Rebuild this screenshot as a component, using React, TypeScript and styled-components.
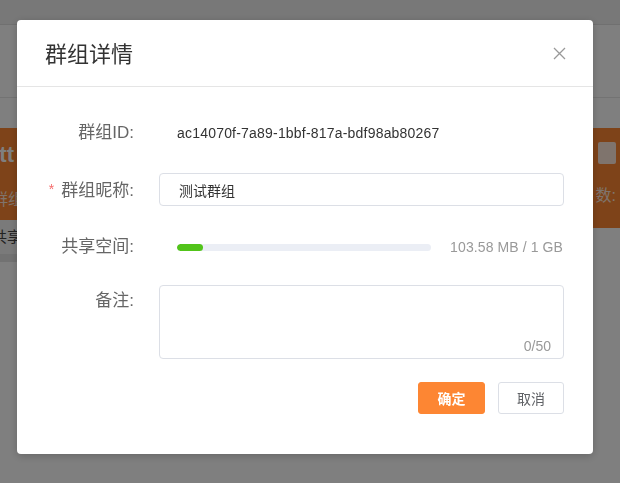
import styled, { createGlobalStyle } from 'styled-components'

const GlobalStyle = createGlobalStyle`
  html, body {
    margin: 0;
    padding: 0;
    background: #fff;
    font-family: "Liberation Sans", "Noto Sans CJK SC", sans-serif;
  }
  * {
    box-sizing: border-box;
  }
`

// Page behind the modal (only its edges show)
const Page = styled.div`
  width: 620px;
  height: 483px;
  overflow: hidden;
  background: #fff;
`

const TopBar = styled.div`
  height: 25px;
  background: #f0f0f0;
  border-bottom: 1px solid #e0e0e0;
`

const SubBar = styled.div`
  height: 73px;
  border-bottom: 1px solid #e6e6e6;
`

const Banner = styled.div`
  margin-top: 30px;
  height: 100px;
  background: #fd8633;
  display: flex;
  justify-content: space-between;
  color: #fff;
`

const BannerSide = styled.div<{ $right?: boolean }>`
  display: flex;
  flex-direction: column;
  align-items: ${p => (p.$right ? 'flex-end' : 'flex-start')};
  padding-top: 14px;
  gap: 22px;
  margin-left: ${p => (p.$right ? '0' : '-8px')};
  margin-right: ${p => (p.$right ? '4px' : '0')};
`

const BannerTitle = styled.div`
  font-size: 22px;
  font-weight: bold;
  line-height: 26px;
`

const BannerText = styled.div`
  font-size: 16px;
  line-height: 20px;
  color: #ffe9da;
`

const BannerIcon = styled.div`
  width: 18px;
  height: 22px;
  background: #ffe9da;
  border-radius: 2px;
`

const InfoRow = styled.div`
  width: 60px;
  margin-top: -8px;
  background: #f4f4f4;
  color: #444;
  font-size: 15px;
  line-height: 34px;
  text-indent: -8px;
  border-bottom: 8px solid #e4e4e4;
  height: 42px;
`

// Modal
const Overlay = styled.div`
  position: fixed;
  inset: 0;
  z-index: 100;
  background: rgba(0, 0, 0, 0.5);
  padding: 20px 0 0 17px;
`

const Dialog = styled.div`
  width: 576px;
  background: #fff;
  border-radius: 4px;
  box-shadow: 0 2px 8px rgba(0, 0, 0, 0.2);
`

const Header = styled.div`
  height: 67px;
  padding: 0 28px 3px;
  border-bottom: 1px solid #e5e5e5;
  display: flex;
  align-items: center;
  justify-content: space-between;
`

const Title = styled.h3`
  margin: 0;
  font-size: 22px;
  font-weight: normal;
  color: #333;
`

const CloseButton = styled.button`
  background: none;
  border: none;
  padding: 0;
  margin: 4px -1px 0 0;
  cursor: pointer;
  display: flex;
  align-items: center;
  justify-content: center;
  width: 13px;
  height: 13px;
`

const Body = styled.div`
  padding: 26px 29px 40px 0;
`

const FormItem = styled.div<{ $gap?: number }>`
  display: flex;
  align-items: flex-start;
  margin-bottom: ${p => p.$gap ?? 20}px;
`

const Label = styled.label<{ $lh: number }>`
  width: 130px;
  flex-shrink: 0;
  padding-right: 13px;
  text-align: right;
  font-size: 17px;
  color: #666;
  line-height: ${p => p.$lh}px;
`

const Required = styled.span`
  color: #f56c6c;
  font-size: 14px;
  margin-right: 7px;
  vertical-align: 2px;
`

const Content = styled.div`
  flex: 1;
  margin-left: 12px;
  min-width: 0;
`

const StaticValue = styled.div`
  padding-left: 18px;
  line-height: 40px;
  font-size: 14px;
  letter-spacing: 0.2px;
  color: #333;
`

const Input = styled.input`
  width: 100%;
  height: 33px;
  border: 1px solid #dcdfe6;
  border-radius: 4px;
  padding: 0 19px;
  font-family: inherit;
  font-size: 14px;
  color: #333;
  outline: none;
`

const ProgressRow = styled.div`
  display: flex;
  align-items: center;
  height: 40px;
  padding-left: 18px;
  padding-right: 1px;
  gap: 19px;
`

const Track = styled.div`
  flex: 1;
  height: 7px;
  background: #ebeef5;
  border-radius: 4px;
  overflow: hidden;
`

const Fill = styled.div`
  height: 100%;
  background: #52c41a;
  border-radius: 4px;
`

const UsageText = styled.span`
  font-size: 14px;
  letter-spacing: 0.1px;
  color: #999;
  white-space: nowrap;
`

const TextareaWrap = styled.div`
  position: relative;
`

const Textarea = styled.textarea`
  display: block;
  width: 100%;
  height: 74px;
  border: 1px solid #dcdfe6;
  border-radius: 4px;
  padding: 6px 15px;
  resize: none;
  font-family: inherit;
  font-size: 14px;
  outline: none;
`

const Counter = styled.span`
  position: absolute;
  right: 13px;
  bottom: 4px;
  font-size: 14px;
  color: #999;
  line-height: 18px;
`

const Footer = styled.div`
  display: flex;
  justify-content: flex-end;
  gap: 13px;
  margin-top: 23px;
`

const Button = styled.button<{ $primary?: boolean }>`
  width: ${p => (p.$primary ? 67 : 66)}px;
  height: 32px;
  padding: 0;
  border-radius: 3px;
  font-family: inherit;
  font-size: 14px;
  cursor: pointer;
  border: 1px solid ${p => (p.$primary ? '#fd8633' : '#dcdfe6')};
  background: ${p => (p.$primary ? '#fd8633' : '#fff')};
  color: ${p => (p.$primary ? '#fff' : '#606266')};
  font-weight: ${p => (p.$primary ? 600 : 'normal')};
`

const used = 103.58
const total = 1024

const App = () => {
  const percent = (used / total) * 100

  return (
    <>
      <GlobalStyle />
      <Page>
        <TopBar />
        <SubBar />
        <Banner>
          <BannerSide>
            <BannerTitle>ttt</BannerTitle>
            <BannerText>群组</BannerText>
          </BannerSide>
          <BannerSide $right>
            <BannerIcon />
            <BannerText>数:</BannerText>
          </BannerSide>
        </Banner>
        <InfoRow>共享</InfoRow>
      </Page>
      <Overlay>
        <Dialog>
          <Header>
            <Title>群组详情</Title>
            <CloseButton aria-label="Close">
              <svg width="13" height="13" viewBox="0 0 13 13">
                <path d="M1 1 L12 12 M12 1 L1 12" stroke="#999" strokeWidth="1.3" fill="none" />
              </svg>
            </CloseButton>
          </Header>
          <Body>
            <FormItem $gap={20}>
              <Label $lh={40}>群组ID:</Label>
              <Content>
                <StaticValue>ac14070f-7a89-1bbf-817a-bdf98ab80267</StaticValue>
              </Content>
            </FormItem>
            <FormItem $gap={20}>
              <Label $lh={33}>
                <Required>*</Required>群组昵称:
              </Label>
              <Content>
                <Input defaultValue="测试群组" />
              </Content>
            </FormItem>
            <FormItem $gap={18}>
              <Label $lh={40}>共享空间:</Label>
              <Content>
                <ProgressRow>
                  <Track>
                    <Fill style={{ width: `${percent}%` }} />
                  </Track>
                  <UsageText>103.58 MB / 1 GB</UsageText>
                </ProgressRow>
              </Content>
            </FormItem>
            <FormItem $gap={0}>
              <Label $lh={32}>备注:</Label>
              <Content>
                <TextareaWrap>
                  <Textarea />
                  <Counter>0/50</Counter>
                </TextareaWrap>
              </Content>
            </FormItem>
            <Footer>
              <Button $primary>确定</Button>
              <Button>取消</Button>
            </Footer>
          </Body>
        </Dialog>
      </Overlay>
    </>
  )
}

export default App
